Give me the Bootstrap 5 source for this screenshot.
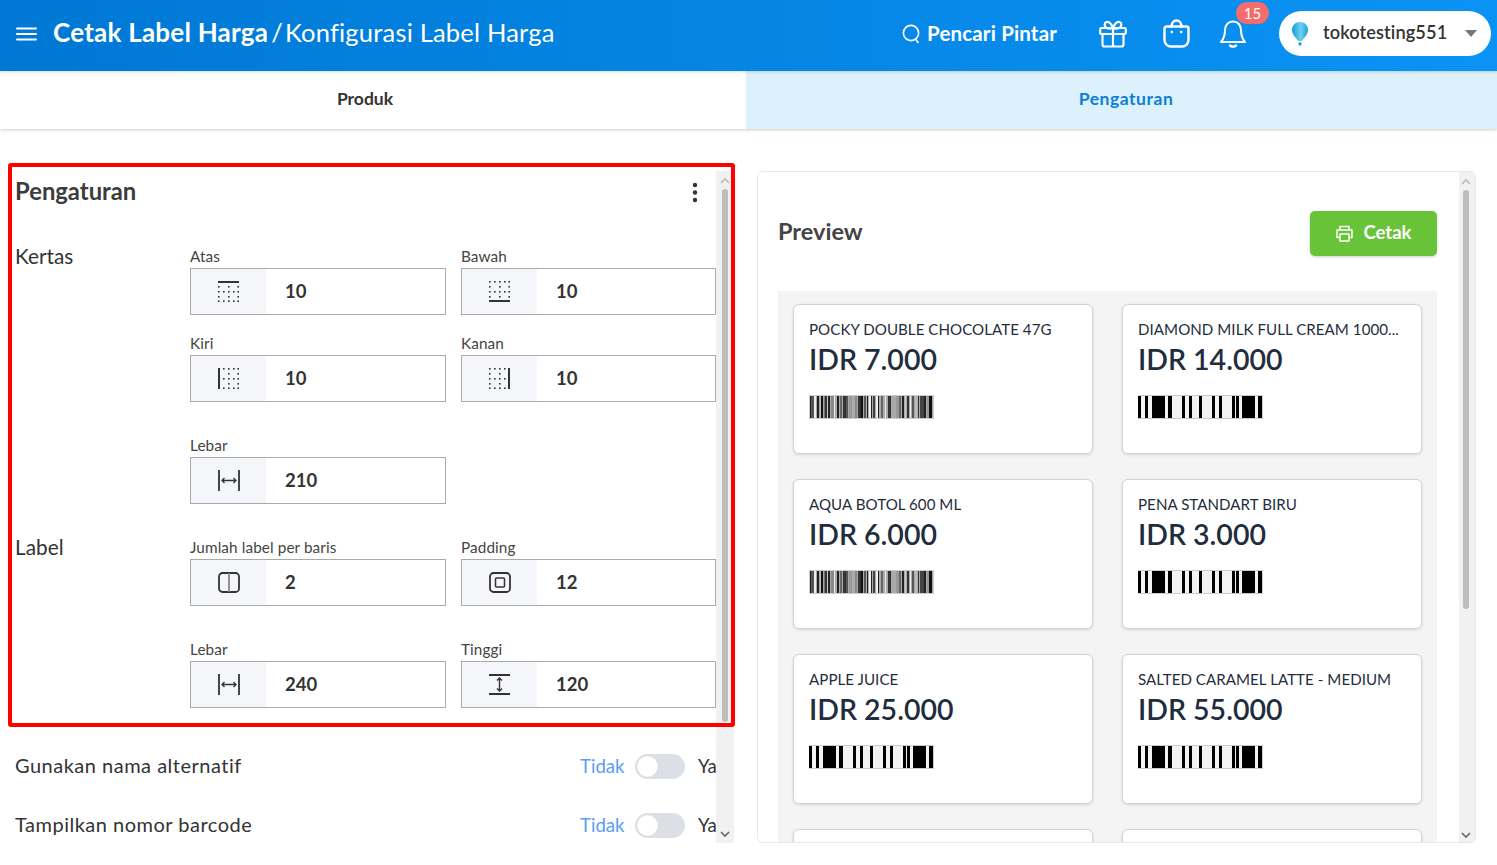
<!DOCTYPE html>
<html lang="id">
<head>
<meta charset="utf-8">
<title>Konfigurasi Label Harga</title>
<link href="https://cdn.jsdelivr.net/npm/bootstrap@5.3.0/dist/css/bootstrap.min.css" rel="stylesheet">
<style>
html,body{height:865px;overflow:hidden;background:#fff;font-family:"Lato","Noto Sans",sans-serif;color:#333}
.topbar{height:71px;background:linear-gradient(90deg,#0078d4,#0a93f5);color:#fff;flex-wrap:nowrap;padding:0 0 4px;justify-content:flex-start;box-shadow:0 1px 3px rgba(0,0,0,.15);position:relative;z-index:2}
.burger{margin-left:16px;margin-right:16px}
.crumb-main{font-size:26px;font-weight:700;letter-spacing:.23px;padding-bottom:2px}
.crumb-sub{font-size:25.5px;font-weight:400;margin-left:3px;letter-spacing:.2px;padding-bottom:2px}
.crumb-sep{margin-right:2px}
.finder{font-size:20.5px;font-weight:700;gap:7px;margin-right:42px;color:#fff;letter-spacing:.15px}
.tool-gift{margin-right:36px}
.tool-bag{margin-right:30px}
.tool-bell{margin-right:33px;position:relative;height:28px}
.notif{position:absolute;left:16px;top:-18px;width:33px;height:22px;background:#f56c6c;border-radius:11px;font-size:15px;font-weight:400;line-height:22px;padding:0;text-align:center;color:#fff}
.acct{width:212px;height:45px;background:#fff;border-radius:23px;margin-right:6px;padding:0 14px 0 12px;color:#333;font-size:18.2px;font-weight:700}
.acct-name{margin-left:14px;letter-spacing:.1px;font-weight:600;padding-bottom:2px}
.caret-down{width:0;height:0;border-left:6px solid transparent;border-right:6px solid transparent;border-top:7px solid #777;margin-left:auto}
.tabbar{height:58px;box-shadow:0 1px 3px rgba(0,0,0,.2);position:relative;z-index:1;background:#fff}
.tab-a{width:746px;padding-right:16px;padding-bottom:2px;color:#333;font-size:17.5px;font-weight:700}
.tab-b{flex:1;padding-left:9px;padding-bottom:2px;background:#dcf1fb;color:#0a80d8;font-size:17.5px;font-weight:700;letter-spacing:.55px}
.workspace{margin-top:42px;height:672px}
.left-pane{width:734px;margin-right:23px;position:relative;flex:none}
.left-body{width:716px;padding-left:15px;overflow:hidden;height:672px;flex:none}
.pane-head{height:75px;padding-top:6px;align-items:flex-start}
.pane-title{font-size:23.8px;font-weight:700;color:#3c3c3c;margin:0;line-height:28px}
.kebab{margin-right:18px;margin-top:5px}
.set-row{display:flex}
.set-name{width:175px;flex:none;font-size:20.8px;line-height:19px;color:#333}
.pair{display:grid;grid-template-columns:256px 255px;column-gap:15px}
.pair.far{margin-top:33px}
.pair.near{margin-top:18px}
.set-row + .set-row{margin-top:33px}
.fld-label{display:block;font-size:15.3px;line-height:20px;margin:0 0 2px;color:#444;letter-spacing:.1px}
.fld .input-group-text{width:76px;background:#f5f6fa;border:1px solid #aaa;border-right:0;border-radius:0;justify-content:center;padding:0;height:47px}
.fld .form-control{height:47px;border:1px solid #aaa;border-left:0;border-radius:0;padding:0 0 2px 19px;font-size:18.5px;font-weight:700;color:#333;background:#fff;box-shadow:none;margin-left:0!important}
.opt-row{height:59px;font-size:20px;color:#333;letter-spacing:.5px}
.opt-label{margin-bottom:3px}
.opt-first{margin-top:29px}
.opt-ctl{width:136px;flex:none;font-size:18.6px;white-space:nowrap;overflow:hidden;letter-spacing:0}
.opt-no{color:#5a9cf8;width:55px;flex:none}
.opt-ctl .form-check{margin:0;padding:0;min-height:0;height:25px;flex:none}
.opt-ctl .form-check-input{width:50px;height:25px;margin:0;background-color:#dcdfe6;border:0;float:none;display:block;--bs-form-check-bg:#dcdfe6;--bs-form-switch-bg:url("data:image/svg+xml,%3csvg xmlns='http://www.w3.org/2000/svg' viewBox='-4 -4 8 8'%3e%3ccircle r='3.3' fill='%23fff'/%3e%3c/svg%3e")}
.opt-yes{margin-left:13px}
.sbar{background:#f1f1f1;flex:none;height:672px;overflow:hidden}
.sbar-l{width:18px;padding-left:6px}
.sbar-r{width:17px;padding-left:4px}
.thumb{width:6px;background:#bdbdbd;border-radius:3px}
.thumb-l{height:533px}
.thumb-r{height:419px}
.arrow{display:block;margin-left:-2px;height:18px}
.arrow-b{margin-top:auto;height:14px}
.red-mark{position:absolute;left:8px;top:-8px;width:727px;height:564px;border:4px solid #f00;border-radius:3px;pointer-events:none;z-index:3}
.prev-pane{width:719px;height:672px;flex:none;border:1px solid #e8e8e8;border-radius:6px;overflow:hidden;flex-direction:row}
.prev-body{width:701px;flex:none;padding-left:20px;padding-right:22px;overflow:hidden}
.prev-head{height:119px}
.prev-title{font-size:23.5px;font-weight:700;color:#444;margin:0 0 1px}
.print-btn{width:127px;height:45px;background:#68c339;border:0;border-radius:5px;color:#fff;font-size:18.5px;font-weight:700;gap:11px;padding:0;box-shadow:0 1px 3px rgba(0,0,0,.2);margin-top:3px}
.tray{background:#f4f4f4;height:552px;padding:13px 0 0 15px;display:grid;grid-template-columns:300px 300px;column-gap:29px;row-gap:25px;align-content:start}
.tag{height:150px;border:1px solid #d3d3de;border-radius:6px;box-shadow:0 1px 3px rgba(0,0,0,.12);padding:14px 15px 15px;color:#1f2d3d}
.tag-name{font-size:15.1px;line-height:20px;white-space:nowrap;letter-spacing:.05px}
.tag-price{font-size:28.5px;line-height:36px;margin-top:2px;font-weight:600}
.bars{display:block;margin-top:18px}
</style>
</head>
<body>
<svg width="0" height="0" class="d-block" style="position:absolute" aria-hidden="true">
<defs>
<symbol id="dots" viewBox="0 0 21 21">
<g fill="#333">
<rect x="0" y="5" width="1.6" height="1.6"/><rect x="10" y="5" width="1.6" height="1.6"/><rect x="19.400" y="5" width="1.6" height="1.6"/>
<rect x="0" y="10" width="1.6" height="1.6"/><rect x="5" y="10" width="1.6" height="1.6"/><rect x="10" y="10" width="1.6" height="1.6"/><rect x="15" y="10" width="1.6" height="1.6"/><rect x="19.400" y="10" width="1.6" height="1.6"/>
<rect x="0" y="15" width="1.6" height="1.6"/><rect x="10" y="15" width="1.6" height="1.6"/><rect x="19.400" y="15" width="1.6" height="1.6"/>
<rect x="5" y="0" width="1.6" height="1.6"/><rect x="10" y="0" width="1.6" height="1.6"/><rect x="15" y="0" width="1.6" height="1.6"/>
<rect x="5" y="19.400" width="1.6" height="1.6"/><rect x="10" y="19.400" width="1.6" height="1.6"/><rect x="15" y="19.400" width="1.6" height="1.6"/>
<rect x="0" y="0" width="1.6" height="1.6"/><rect x="19.400" y="0" width="1.6" height="1.6"/><rect x="0" y="19.400" width="1.6" height="1.6"/><rect x="19.400" y="19.400" width="1.6" height="1.6"/>
</g>
</symbol>
<symbol id="bc-sparse" viewBox="0 0 125 24">
<rect x=".5" y=".5" width="124" height="23" fill="#f3f3f3" stroke="#ccc"/>
<g fill="#000"><rect x="0" y="1" width="3" height="22"/><rect x="7" y="1" width="3" height="22"/><rect x="14" y="1" width="13" height="22"/><rect x="30" y="1" width="4" height="22"/><rect x="44" y="1" width="3" height="22"/><rect x="51" y="1" width="3" height="22"/><rect x="61" y="1" width="3" height="22"/><rect x="74" y="1" width="3" height="22"/><rect x="81" y="1" width="3" height="22"/><rect x="94" y="1" width="3" height="22"/><rect x="98" y="1" width="3" height="22"/><rect x="104" y="1" width="13" height="22"/><rect x="120" y="1" width="4" height="22"/></g>
</symbol>
<symbol id="bc-dense" viewBox="0 0 125 24">
<rect x=".5" y=".5" width="124" height="23" fill="#aaa" stroke="#ccc"/>
<g>
<rect x="1" y="1" width="1" height="22" fill="#222"/><rect x="2" y="1" width="3" height="22" fill="#555"/><rect x="5" y="1" width="2" height="22" fill="#eee"/><rect x="8" y="1" width="2" height="22" fill="#222"/><rect x="11" y="1" width="1" height="22" fill="#bbb"/><rect x="12" y="1" width="2" height="22" fill="#111"/><rect x="15" y="1" width="1" height="22" fill="#777"/><rect x="16" y="1" width="2" height="22" fill="#333"/><rect x="18" y="1" width="1" height="22" fill="#ccc"/><rect x="19" y="1" width="2" height="22" fill="#222"/><rect x="22" y="1" width="3" height="22" fill="#888"/><rect x="25" y="1" width="1" height="22" fill="#eee"/><rect x="28" y="1" width="2" height="22" fill="#222"/><rect x="31" y="1" width="2" height="22" fill="#666"/><rect x="34" y="1" width="3" height="22" fill="#333"/><rect x="37" y="1" width="2" height="22" fill="#555"/><rect x="40" y="1" width="3" height="22" fill="#999"/><rect x="43" y="1" width="3" height="22" fill="#aaa"/><rect x="46" y="1" width="2" height="22" fill="#888"/><rect x="49" y="1" width="3" height="22" fill="#333"/><rect x="52" y="1" width="2" height="22" fill="#111"/><rect x="55" y="1" width="2" height="22" fill="#555"/><rect x="58" y="1" width="1" height="22" fill="#222"/><rect x="60" y="1" width="2" height="22" fill="#eee"/><rect x="62" y="1" width="1" height="22" fill="#222"/><rect x="64" y="1" width="2" height="22" fill="#444"/><rect x="67" y="1" width="2" height="22" fill="#f0f0f0"/><rect x="69" y="1" width="1" height="22" fill="#222"/><rect x="72" y="1" width="2" height="22" fill="#666"/><rect x="76" y="1" width="1" height="22" fill="#eee"/><rect x="79" y="1" width="3" height="22" fill="#333"/><rect x="84" y="1" width="3" height="22" fill="#aaa"/><rect x="87" y="1" width="3" height="22" fill="#999"/><rect x="90" y="1" width="2" height="22" fill="#666"/><rect x="93" y="1" width="2" height="22" fill="#222"/><rect x="96" y="1" width="1" height="22" fill="#ccc"/><rect x="98" y="1" width="2" height="22" fill="#333"/><rect x="101" y="1" width="1" height="22" fill="#eee"/><rect x="103" y="1" width="2" height="22" fill="#555"/><rect x="106" y="1" width="2" height="22" fill="#bbb"/><rect x="109" y="1" width="1" height="22" fill="#333"/><rect x="111" y="1" width="4" height="22" fill="#444"/><rect x="115" y="1" width="2" height="22" fill="#222"/><rect x="118" y="1" width="2" height="22" fill="#999"/><rect x="120" y="1" width="3" height="22" fill="#111"/>
</g>
</symbol>
</defs>
</svg>

<nav class="navbar topbar d-flex align-items-center">
  <svg class="burger" width="21" height="14" viewBox="0 0 21 14" fill="none" stroke="#fff" stroke-width="2" stroke-linecap="round"><path d="M1 1.500h19M1 7h19M1 12.500h19"/></svg>
  <span class="crumb-main">Cetak Label Harga</span>
  <span class="crumb-sub"><span class="crumb-sep">/</span>Konfigurasi Label Harga</span>
  <div class="d-flex align-items-center ms-auto">
    <span class="d-flex align-items-center finder">
      <svg width="18" height="20" viewBox="0 0 18 20" fill="none" stroke="#fff" stroke-width="1.6" stroke-linecap="round"><circle cx="9" cy="9" r="7.6"/><path d="M13.500 15l2.500 3.500"/></svg>
      Pencari Pintar
    </span>
    <svg class="tool-gift" width="28" height="28" viewBox="0 0 28 28" fill="none" stroke="#fff" stroke-width="2.2" stroke-linejoin="round" stroke-linecap="round"><rect x="1.200" y="8" width="25.6" height="6" rx="1.200"/><path d="M3.500 14v10.500a2 2 0 0 0 2 2h17a2 2 0 0 0 2-2V14M14 8v18.500M14 8C12 3 9.500 1.500 7.500 2S5 5.500 7 7.500 14 8 14 8ZM14 8c2-5 4.500-6.500 6.500-6S23 5.500 21 7.500 14 8 14 8Z"/></svg>
    <svg class="tool-bag" width="27" height="29" viewBox="0 0 27 29" fill="none" stroke="#fff" stroke-width="2.4" stroke-linecap="round" stroke-linejoin="round"><path d="M3.500 7.500h20a2 2 0 0 1 2 2V21a6.500 6.500 0 0 1-6.500 6.500H8A6.500 6.500 0 0 1 1.500 21V9.500a2 2 0 0 1 2-2Z"/><path d="M8.500 7.500C8.500 4 10.500 1.500 13.500 1.500s5 2.500 5 6"/><circle cx="8.800" cy="13" r="1.300" fill="#fff" stroke="none"/><circle cx="18.200" cy="13" r="1.300" fill="#fff" stroke="none"/></svg>
    <div class="tool-bell">
      <svg width="26" height="28" viewBox="0 0 26 28" fill="none" stroke="#fff" stroke-width="2" stroke-linecap="round" stroke-linejoin="round"><path d="M13 1.500c-5 0-8 3.800-8 8.500 0 6-1.500 9-4 12h24c-2.500-3-4-6-4-12 0-4.700-3-8.500-8-8.500Z"/><path d="M10 25.500c1 1.500 5 1.500 6 0" stroke-width="2.400"/></svg>
      <span class="badge notif">15</span>
    </div>
    <div class="d-flex align-items-center acct">
      <svg width="18" height="26" viewBox="0 0 18 26"><defs><linearGradient id="blg" x1="0" x2="1" y1="0" y2="0"><stop offset="0" stop-color="#0e9fd8"/><stop offset=".55" stop-color="#6fd0f0"/><stop offset="1" stop-color="#18a6dc"/></linearGradient></defs><path d="M9 1c4.700 0 8 3.300 8 8 0 4.500-4.500 9-6.500 11h-3C5.500 18 1 13.500 1 9c0-4.700 3.300-8 8-8Z" fill="url(#blg)"/><rect x="7.500" y="21.500" width="3" height="3" rx=".7" fill="#16a0d8"/></svg>
      <span class="acct-name">tokotesting551</span>
      <span class="caret-down"></span>
    </div>
  </div>
</nav>

<div class="d-flex tabbar">
  <div class="d-flex align-items-center justify-content-center tab-a">Produk</div>
  <div class="d-flex align-items-center justify-content-center tab-b">Pengaturan</div>
</div>

<main class="d-flex workspace">
  <section class="left-pane d-flex">
    <div class="left-body">
      <div class="d-flex justify-content-between pane-head">
        <h2 class="pane-title">Pengaturan</h2>
        <svg class="kebab" width="6" height="21" viewBox="0 0 6 21" fill="#333"><circle cx="3" cy="3" r="2.200"/><circle cx="3" cy="10.500" r="2.200"/><circle cx="3" cy="18" r="2.200"/></svg>
      </div>

      <div class="set-row">
        <div class="set-name">Kertas</div>
        <div>
          <div class="pair">
            <div class="fld"><label class="fld-label">Atas</label><div class="input-group flex-nowrap"><span class="input-group-text"><svg width="21" height="21" viewBox="0 0 21 21"><use href="#dots"/><rect x="0" y="0" width="21" height="2" fill="#333"/></svg></span><input class="form-control" value="10"></div></div>
            <div class="fld"><label class="fld-label">Bawah</label><div class="input-group flex-nowrap"><span class="input-group-text"><svg width="21" height="21" viewBox="0 0 21 21"><use href="#dots"/><rect x="0" y="19" width="21" height="2" fill="#333"/></svg></span><input class="form-control" value="10"></div></div>
          </div>
          <div class="pair near">
            <div class="fld"><label class="fld-label">Kiri</label><div class="input-group flex-nowrap"><span class="input-group-text"><svg width="21" height="21" viewBox="0 0 21 21"><use href="#dots"/><rect x="0" y="0" width="2" height="21" fill="#333"/></svg></span><input class="form-control" value="10"></div></div>
            <div class="fld"><label class="fld-label">Kanan</label><div class="input-group flex-nowrap"><span class="input-group-text"><svg width="21" height="21" viewBox="0 0 21 21"><use href="#dots"/><rect x="19" y="0" width="2" height="21" fill="#333"/></svg></span><input class="form-control" value="10"></div></div>
          </div>
          <div class="pair far">
            <div class="fld"><label class="fld-label">Lebar</label><div class="input-group flex-nowrap"><span class="input-group-text"><svg width="22" height="21" viewBox="0 0 22 21" fill="none" stroke="#333" stroke-width="1.800"><path d="M1 0v21M21 0v21"/><path d="M4 10.500h14M6.500 8l-2.500 2.500L6.500 13M15.500 8l2.500 2.500L15.500 13" stroke-width="1.300"/></svg></span><input class="form-control" value="210"></div></div>
          </div>
        </div>
      </div>

      <div class="set-row">
        <div class="set-name">Label</div>
        <div>
          <div class="pair">
            <div class="fld"><label class="fld-label">Jumlah label per baris</label><div class="input-group flex-nowrap"><span class="input-group-text"><svg width="22" height="21" viewBox="0 0 22 21" fill="none" stroke="#333" stroke-width="1.800"><rect x="1" y="1" width="20" height="19" rx="3.500"/><path d="M11 1v19" stroke="#888"/></svg></span><input class="form-control" value="2"></div></div>
            <div class="fld"><label class="fld-label">Padding</label><div class="input-group flex-nowrap"><span class="input-group-text"><svg width="22" height="21" viewBox="0 0 22 21" fill="none" stroke="#333" stroke-width="1.800"><rect x="1" y="1" width="20" height="19" rx="3.500"/><rect x="6.500" y="6" width="9" height="9" rx="1" stroke-width="1.500"/></svg></span><input class="form-control" value="12"></div></div>
          </div>
          <div class="pair far">
            <div class="fld"><label class="fld-label">Lebar</label><div class="input-group flex-nowrap"><span class="input-group-text"><svg width="22" height="21" viewBox="0 0 22 21" fill="none" stroke="#333" stroke-width="1.800"><path d="M1 0v21M21 0v21"/><path d="M4 10.500h14M6.500 8l-2.500 2.500L6.500 13M15.500 8l2.500 2.500L15.500 13" stroke-width="1.300"/></svg></span><input class="form-control" value="240"></div></div>
            <div class="fld"><label class="fld-label">Tinggi</label><div class="input-group flex-nowrap"><span class="input-group-text"><svg width="21" height="21" viewBox="0 0 21 21" fill="none" stroke="#333" stroke-width="1.800"><path d="M0 1h21M0 20h21"/><path d="M10.500 4v13M8 6.500L10.500 4 13 6.500M8 14.500l2.500 2.500 2.500-2.500" stroke-width="1.400"/></svg></span><input class="form-control" value="120"></div></div>
          </div>
        </div>
      </div>

      <div class="d-flex justify-content-between align-items-center opt-row opt-first">
        <span class="opt-label">Gunakan nama alternatif</span>
        <div class="d-flex align-items-center opt-ctl"><span class="opt-no">Tidak</span><div class="form-check form-switch"><input class="form-check-input" type="checkbox" role="switch"></div><span class="opt-yes">Ya</span></div>
      </div>
      <div class="d-flex justify-content-between align-items-center opt-row">
        <span class="opt-label">Tampilkan nomor barcode</span>
        <div class="d-flex align-items-center opt-ctl"><span class="opt-no">Tidak</span><div class="form-check form-switch"><input class="form-check-input" type="checkbox" role="switch"></div><span class="opt-yes">Ya</span></div>
      </div>
    </div>
    <div class="sbar sbar-l d-flex flex-column">
      <svg class="arrow" width="10" height="18" viewBox="0 0 10 18" fill="none" stroke="#bbb" stroke-width="1.600"><path d="M1 12l4-4 4 4"/></svg>
      <div class="thumb thumb-l"></div>
      <svg class="arrow arrow-b" width="10" height="14" viewBox="0 0 10 14" fill="none" stroke="#666" stroke-width="1.600"><path d="M1 3l4 4 4-4"/></svg>
    </div>
    <div class="red-mark"></div>
  </section>

  <section class="card prev-pane d-flex">
    <div class="prev-body">
      <div class="d-flex justify-content-between align-items-center prev-head">
        <h2 class="prev-title">Preview</h2>
        <button class="btn d-flex align-items-center justify-content-center print-btn">
          <svg width="17" height="17" viewBox="0 0 17 17" fill="none" stroke="#fff" stroke-width="1.500" stroke-linejoin="round"><path d="M4 5V1.500h9V5"/><path d="M4 12.500H1V5h15v7.500h-3"/><rect x="4" y="9" width="9" height="7"/></svg>
          Cetak
        </button>
      </div>
      <div class="tray">
        <article class="card tag"><div class="tag-name">POCKY DOUBLE CHOCOLATE 47G</div><div class="tag-price">IDR 7.000</div><svg class="bars" width="125" height="24"><use href="#bc-dense"/></svg></article>
        <article class="card tag"><div class="tag-name">DIAMOND MILK FULL CREAM 1000...</div><div class="tag-price">IDR 14.000</div><svg class="bars" width="125" height="24"><use href="#bc-sparse"/></svg></article>
        <article class="card tag"><div class="tag-name">AQUA BOTOL 600 ML</div><div class="tag-price">IDR 6.000</div><svg class="bars" width="125" height="24"><use href="#bc-dense"/></svg></article>
        <article class="card tag"><div class="tag-name">PENA STANDART BIRU</div><div class="tag-price">IDR 3.000</div><svg class="bars" width="125" height="24"><use href="#bc-sparse"/></svg></article>
        <article class="card tag"><div class="tag-name">APPLE JUICE</div><div class="tag-price">IDR 25.000</div><svg class="bars" width="125" height="24"><use href="#bc-sparse"/></svg></article>
        <article class="card tag"><div class="tag-name">SALTED CARAMEL LATTE - MEDIUM</div><div class="tag-price">IDR 55.000</div><svg class="bars" width="125" height="24"><use href="#bc-sparse"/></svg></article>
        <article class="card tag"></article>
        <article class="card tag"></article>
      </div>
    </div>
    <div class="sbar sbar-r d-flex flex-column">
      <svg class="arrow" width="10" height="18" viewBox="0 0 10 18" fill="none" stroke="#bbb" stroke-width="1.600"><path d="M1 12l4-4 4 4"/></svg>
      <div class="thumb thumb-r"></div>
      <svg class="arrow arrow-b" width="10" height="14" viewBox="0 0 10 14" fill="none" stroke="#666" stroke-width="1.600"><path d="M1 3l4 4 4-4"/></svg>
    </div>
  </section>
</main>
<script src="https://cdn.jsdelivr.net/npm/bootstrap@5.3.0/dist/js/bootstrap.bundle.min.js"></script>
</body>
</html>
